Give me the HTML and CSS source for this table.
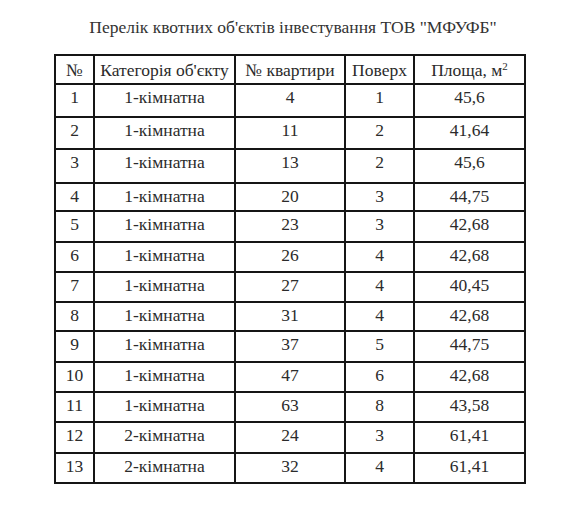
FILE: index.html
```html
<!DOCTYPE html>
<html lang="uk">
<head>
<meta charset="utf-8">
<title>Перелік квотних об'єктів</title>
<link rel="stylesheet" href="styles.css">
</head>
<body>
<div class="page">
  <h1 class="title">Перелік квотних об'єктів інвестування ТОВ "МФУФБ"</h1>
  <table class="quota">
    <colgroup>
      <col class="c-num">
      <col class="c-cat">
      <col class="c-apt">
      <col class="c-floor">
      <col class="c-area">
    </colgroup>
    <thead>
      <tr><th>№</th><th>Категорія об'єкту</th><th>№ квартири</th><th>Поверх</th><th>Площа, м<sup>2</sup></th></tr>
    </thead>
    <tbody>
      <tr><td>1</td><td>1-кімнатна</td><td>4</td><td>1</td><td>45,6</td></tr>
      <tr><td>2</td><td>1-кімнатна</td><td>11</td><td>2</td><td>41,64</td></tr>
      <tr><td>3</td><td>1-кімнатна</td><td>13</td><td>2</td><td>45,6</td></tr>
      <tr><td>4</td><td>1-кімнатна</td><td>20</td><td>3</td><td>44,75</td></tr>
      <tr><td>5</td><td>1-кімнатна</td><td>23</td><td>3</td><td>42,68</td></tr>
      <tr><td>6</td><td>1-кімнатна</td><td>26</td><td>4</td><td>42,68</td></tr>
      <tr><td>7</td><td>1-кімнатна</td><td>27</td><td>4</td><td>40,45</td></tr>
      <tr><td>8</td><td>1-кімнатна</td><td>31</td><td>4</td><td>42,68</td></tr>
      <tr><td>9</td><td>1-кімнатна</td><td>37</td><td>5</td><td>44,75</td></tr>
      <tr><td>10</td><td>1-кімнатна</td><td>47</td><td>6</td><td>42,68</td></tr>
      <tr><td>11</td><td>1-кімнатна</td><td>63</td><td>8</td><td>43,58</td></tr>
      <tr><td>12</td><td>2-кімнатна</td><td>24</td><td>3</td><td>61,41</td></tr>
      <tr><td>13</td><td>2-кімнатна</td><td>32</td><td>4</td><td>61,41</td></tr>
    </tbody>
  </table>
</div>
</body>
</html>
```

FILE: styles.css
```css
html, body {
  margin: 0;
  padding: 0;
  background: #ffffff;
}

.page {
  width: 580px;
  height: 510px;
  padding-top: 17px;
  box-sizing: border-box;
  font-family: "Liberation Serif", "Times New Roman", serif;
  color: #2b2b2b;
}

.title {
  margin: 0 0 17px 0;
  padding-left: 6px;
  text-align: center;
  font-family: "Liberation Serif", "Times New Roman", serif;
  font-size: 17.5px;
  font-weight: normal;
  line-height: 20px;
  color: #333333;
}

.quota {
  margin-left: 54px;
  border-collapse: collapse;
  table-layout: fixed;
  width: 470px;
  font-family: "Liberation Serif", "Times New Roman", serif;
  font-size: 17.5px;
}

.c-num { width: 39px; }
.c-cat { width: 141px; }
.c-apt { width: 110px; }
.c-floor { width: 69px; }
.c-area { width: 111px; }

.quota th,
.quota td {
  border: 2px solid #151515;
  padding: 2px 0 0 0;
  text-align: center;
  vertical-align: top;
  font-weight: normal;
  line-height: 20px;
  white-space: nowrap;
}

.quota th {
  padding-top: 4px;
}

.quota sup {
  font-size: 11px;
  line-height: 0;
  vertical-align: 6px;
}

.quota thead tr { height: 29px; }
.quota tbody tr { height: 30px; }
.quota tbody tr:nth-child(1) { height: 33px; }
.quota tbody tr:nth-child(2) { height: 32px; }
.quota tbody tr:nth-child(3) { height: 34px; }
.quota tbody tr:nth-child(4) { height: 28px; }
.quota tbody tr:nth-child(5) { height: 31px; }
.quota tbody tr:nth-child(8) { height: 29px; }
.quota tbody tr:nth-child(9) { height: 31px; }
.quota tbody tr:nth-child(12) { height: 31px; }
```
